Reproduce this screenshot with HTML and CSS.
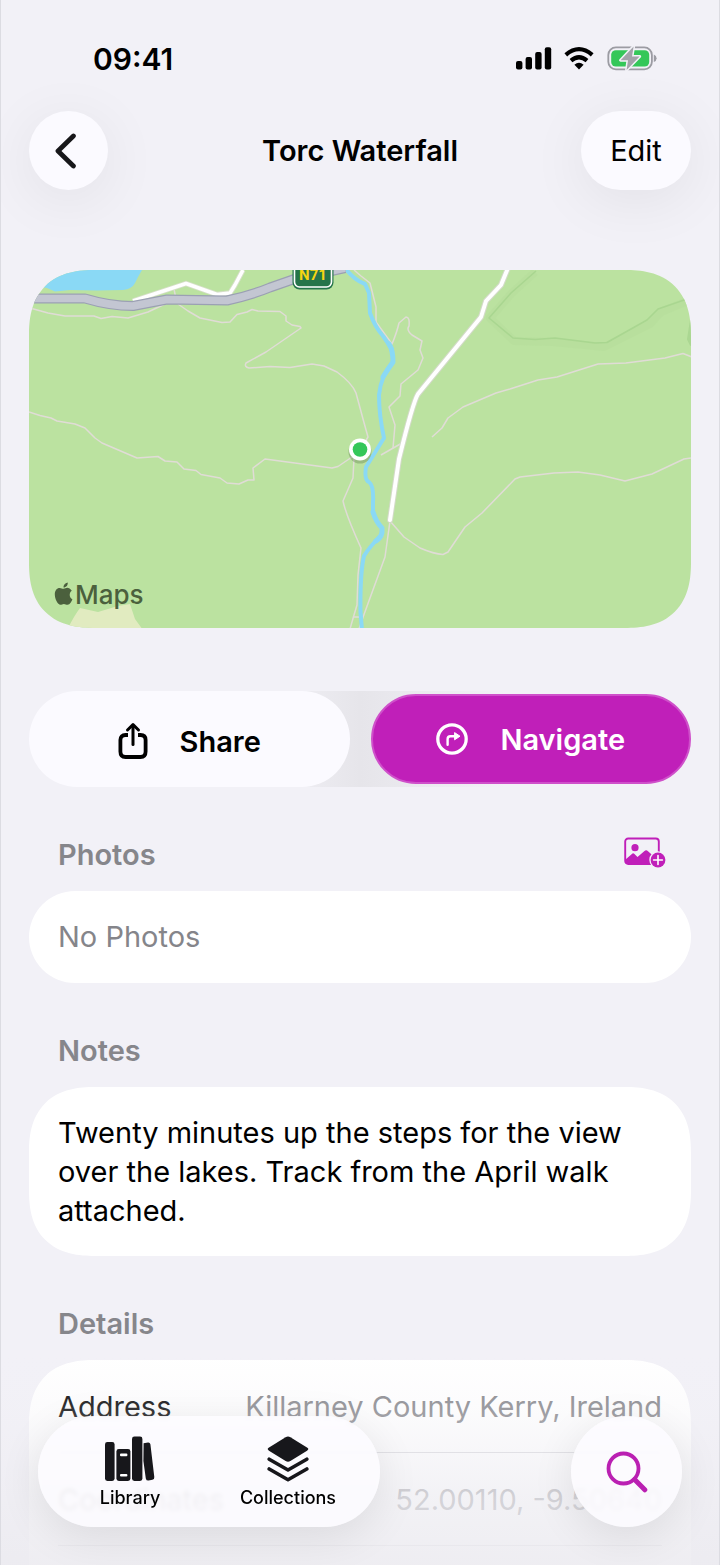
FILE: index.html
```html
<!DOCTYPE html>
<html lang="en">
<head>
<meta charset="utf-8">
<meta name="viewport" content="width=device-width, initial-scale=1">
<title>Torc Waterfall</title>
<link rel="stylesheet" href="styles.css">
</head>
<body>
<div class="screen">
  <div class="status">
    <span class="status-time">09:41</span>
    <svg class="status-icons" viewBox="516 45 142 28" width="142" height="28" aria-hidden="true">
      <g fill="#000">
        <rect x="516" y="61" width="6.4" height="8.4" rx="2"/>
        <rect x="525.6" y="57" width="6.4" height="12.4" rx="2"/>
        <rect x="535.2" y="52" width="6.4" height="17.4" rx="2"/>
        <rect x="544.8" y="47.2" width="6.4" height="22.2" rx="2"/>
      </g>
      <g fill="none" stroke="#000" stroke-width="4.2">
        <path d="M565.8 54.8 Q579 43.5 592.2 54.8"/>
        <path d="M571 60.6 Q579 53.8 587 60.6"/>
      </g>
      <path d="M574.4 64.8 Q579 60.8 583.6 64.8 L579 69.6 Z" fill="#000"/>
      <rect x="608.3" y="47.3" width="43.6" height="22" rx="7.6" fill="none" stroke="#9c9ca3" stroke-width="1.8"/>
      <path d="M653.8 54.4 q2.8 1 2.8 3.8 t-2.8 3.8z" fill="#9c9ca3"/>
      <rect x="611.2" y="50.2" width="38" height="16.4" rx="4.6" fill="#34c759"/>
      <path d="M633.6 46.4 L620.6 60.2 H628 L626.6 70 L639.6 56.4 H632 Z" fill="#a3a3aa" stroke="#f2f1f7" stroke-width="3" stroke-linejoin="round" paint-order="stroke"/>
    </svg>
  </div>

  <header class="navbar">
    <button class="glass back" type="button" aria-label="Back">
      <svg viewBox="0 0 22 36" width="22" height="36" aria-hidden="true"><path d="M18.4 3 L3 18 L18.4 33" fill="none" stroke="#17171a" stroke-width="4.8" stroke-linecap="round" stroke-linejoin="round"/></svg>
    </button>
    <h1 class="title">Torc Waterfall</h1>
    <button class="glass edit" type="button">Edit</button>
  </header>

  <main class="content">
    <svg class="map" viewBox="29 270 662 358" preserveAspectRatio="xMidYMid slice" role="img" aria-label="Map of Torc Waterfall">
      <rect x="29" y="270" width="662" height="358" fill="#bbe2a0"/>
      <path d="M36 286 L47 288 L55 291.5 L70 290 L97 290.5 L123 290 Q132 289 135 283 L138 277 L142 270 H29 Z" fill="#8ad9f5"/>
      <path d="M67 630 Q74 616 80 608 L98 612 L118 606 L130 604 L135 619 L143 630 Z" fill="#e1ebc0"/>
      <g fill="none" stroke-linejoin="round">
        <path d="M535 272 L512 293 L490 318 L514 341 L553 342 L604 347 L650 324 L661 312 L690 300" stroke="#b5dd9b" stroke-width="8" opacity=".6"/>
        <path d="M536 271 L511 293 L489 318 L513 338 L535 339.5 L555 338 L595 343 L607 342.5 L647 320 L658 309 L690 298" stroke="#a9d690" stroke-width="1.6"/>
        <path d="M692 320 L689 339 L692 345" stroke="#abd792" stroke-width="4"/>
      </g>
      <g fill="none" stroke="#e0dcd6" stroke-width="1.5" stroke-linejoin="round">
        <path d="M30 308 L48 313 L65 316 L94 316 L101 318.5 L112 316.5 L128 318 L148 312 L165 304 L176 299 L174 289"/>
        <path d="M178 304 L188 311 L200 318 L222 322.5 L230 322 L237 314.5 L247 312 L252 309.5 L258 311 L280 311.5 L286 316 L286 321 L292 325 L300 326.5 L301 328 L266 352 L246 363 Q244 367 249 368 L270 366.5 L290 367.5 L312 364 L324 366 L337 372 Q352 383 356 393 L363 419 L368 437 L362 447"/>
        <path d="M29 412 L40 415.5 L51 418 L57 421 L75 424 L85 428 L95 438 L102 443 L137 458 L158 456.5 L165 461 L177 462 L184 469 L196 470.5 L201 474.5 L220 478 L227 483 L239 484 L248 480 L254 480 L253 468 L265 459 L332 468 L338 466.5 L352 457"/>
        <path d="M354 458 L353 478 L343 501 Q346 515 361 548 L358 575 L357 605 L354 615 L350 629 M354 617 H362"/>
        <path d="M390 521 L385 557 L370 598 L362 620 L359 629"/>
        <path d="M354 270 L361 276 L370 283 L376 307 L376 322 L392 344 Q397 332 399 323 L406 317 Q410 317 409 326 Q406 330 412 335 L422 341 L420 350 L423 358 L418 370 L401 384 L400 396 L389 407 L395 425 L393 448"/>
        <path d="M381 455 L402 443"/>
        <path d="M432 437 L442 428 L448 418 L463 407 L496 393 L510 389 L538 380 L557 377 L598 364 L626 363 L665 358 L683 353.5 L692 357"/>
        <path d="M390 521 L404 537 L420 548 Q434 554 443 554.5 L448 552 L465 527 L482 513 L515 479 L520 477 L554 473 L578 472 L600 475 L625 481 L652 474 L684 459 L691 458"/>
      </g>
      <g fill="none" stroke="#8ad9f5" stroke-linecap="round" stroke-linejoin="round">
        <path d="M345 268 Q354 280 365 284 L369 293 L370 313 Q375 327 383 336 L392 349" stroke-width="4"/>
        <path d="M389 344 Q393 350 393 362 Q386 372 383 377" stroke-width="5"/>
        <path d="M393 362 Q381 375 379 395 Q379 415 384 438 L366 467 Q364 480 369 482 Q374 486 373 502 L373 513" stroke-width="4"/>
        <path d="M373 512 Q376 522 382 528 Q383 537 376 541" stroke-width="5"/>
        <path d="M380 536 Q368 549 364 556 Q360 573 360.500 612 L362 630" stroke-width="4"/>
      </g>
      <g fill="none" stroke-linejoin="round">
        <path d="M133 301 L186 283.500 L217 294.500 L230 293 L235 285 L243 270" stroke="#d6dfc9" stroke-width="5.4"/>
        <path d="M133 301 L186 283.500 L217 294.500 L230 293 L235 285 L243 270" stroke="#fff" stroke-width="3.6"/>
        <path d="M508 268 L501 285 L486 301 L481 317 L418 394 Q413 402 399 459 L390 520" stroke="#d3dac8" stroke-width="6" stroke-linecap="round"/>
        <path d="M508 268 L501 285 L486 301 L481 317 L418 394 Q413 402 399 459 L390 520" stroke="#fff" stroke-width="4" stroke-linecap="round"/>
        <path d="M28 298.500 L85 298.500 Q110 306 133 306 L167 299.500 L227 300.500 Q252 295 270 287.500 L293 279.500 L345 268" stroke="#9ba0b3" stroke-width="10"/>
        <path d="M28 298.500 L85 298.500 Q110 306 133 306 L167 299.500 L227 300.500 Q252 295 270 287.500 L293 279.500 L345 268" stroke="#c3c6d2" stroke-width="7.600"/>
      </g>
      <rect x="292.500" y="255" width="41" height="34.500" rx="7" fill="#26744a"/>
      <rect x="294.500" y="255" width="37" height="32" rx="5" fill="#26744a" stroke="#fff" stroke-width="1.600"/>
      <text class="map-shield" x="313" y="280" text-anchor="middle">N71</text>
      <path transform="translate(54.500 583)" d="M12.800 4.700 C11.500 4.700 10.300 5.700 9 5.700 C7.700 5.700 6.800 4.900 5.200 4.900 C2.300 4.900 .3 7.500 .3 11.300 C.3 16.200 3.300 21.700 5.900 21.700 C7.200 21.700 7.900 20.900 9.400 20.900 C11 20.900 11.500 21.700 13 21.700 C15.500 21.700 17.200 18.200 17.900 16.200 C14.400 14.600 14.500 9.500 17.300 7.800 C16 5.500 14.200 4.700 12.800 4.700 Z M13.200 -.6 C10.300 0 8.700 2.300 9 4.500 C11.800 4.400 13.600 1.900 13.200 -.6 Z" fill="#4b603d"/>
      <text class="map-brand" x="75" y="604">Maps</text>
      <circle cx="360" cy="452" r="11.500" fill="#3c5a30" opacity=".28"/>
      <circle cx="360" cy="449.500" r="11" fill="#fff"/>
      <circle cx="360" cy="449.500" r="7.300" fill="#34c759"/>
    </svg>

    <div class="actions">
      <button class="action share" type="button">
        <svg viewBox="0 0 30 38" width="30" height="38" aria-hidden="true"><g fill="none" stroke="#000" stroke-width="3.800" stroke-linecap="round" stroke-linejoin="round"><path d="M10 13 H7.500 Q2.400 13 2.400 18 V29.500 Q2.400 35 7.500 35 H22.500 Q27.600 35 27.600 29.500 V18 Q27.600 13 22.500 13 H20" stroke-linecap="butt"/><path d="M15 22.500 V4" stroke-width="3"/><path d="M9.500 8 L15 2.600 L20.500 8" stroke-width="3"/></g></svg>
        Share
      </button>
      <button class="action navigate" type="button">
        <svg viewBox="0 0 32 32" width="32" height="32" aria-hidden="true"><circle cx="16" cy="16" r="14.200" fill="none" stroke="#fff" stroke-width="3.300"/><path d="M11.600 21.800 V16 Q11.600 13.200 14.400 13.200 H19" fill="none" stroke="#fff" stroke-width="2.400" stroke-linecap="round"/><path d="M18.600 9.600 L24 13.200 L18.600 16.800 Z" fill="#fff" stroke="#fff" stroke-linejoin="round"/></svg>
        Navigate
      </button>
    </div>

    <section>
      <div class="section-head">
        <h2>Photos</h2>
        <button class="add-photo" type="button" aria-label="Add photo">
          <svg viewBox="0 0 42 32" width="42" height="32" aria-hidden="true"><rect x="1.200" y="1.500" width="33.600" height="25.500" rx="3" fill="none" stroke="#c01fb9" stroke-width="1.900"/><circle cx="11" cy="10.700" r="3.600" fill="#c01fb9"/><path d="M1.500 22.500 L8.500 16.600 Q9.300 16 10.200 16.800 L13.500 20 L20.500 13.900 Q22.300 12.600 24 14.200 L35 24 V27 H3 Q1.500 27 1.500 25 Z" fill="#c01fb9"/><circle cx="34" cy="23" r="8.700" fill="#f2f1f7"/><circle cx="34" cy="23" r="7.400" fill="#c01fb9"/><path d="M34 18.600 V27.400 M29.600 23 H38.400" stroke="#fff" stroke-width="1.600" stroke-linecap="round"/></svg>
        </button>
      </div>
      <div class="card photos-card">No Photos</div>
    </section>

    <section>
      <div class="section-head"><h2>Notes</h2></div>
      <p class="card notes-card">Twenty minutes up the steps for the view over the lakes. Track from the April walk attached.</p>
    </section>

    <section>
      <div class="section-head"><h2>Details</h2></div>
      <dl class="card details-card">
        <div class="row"><dt>Address</dt><dd>Killarney County Kerry, Ireland</dd></div>
        <div class="row"><dt>Coordinates</dt><dd>52.00110, -9.50640</dd></div>
        <div class="row"></div>
      </dl>
    </section>
  </main>

  <div class="fade"></div>

  <nav class="dock">
    <div class="tabs">
      <a class="tab" href="#library">
        <svg viewBox="0 0 50 46" width="50" height="46" aria-hidden="true"><g fill="#17171b"><rect x="0" y="6" width="9.600" height="39" rx="2.400"/><rect x="11.400" y="13" width="14" height="32" rx="2.400"/><rect x="27" y="0.500" width="10.400" height="44.500" rx="2.400"/><path d="M38.600 7.200 L43 6.400 Q45 6.200 45.400 8.200 L49.300 41 Q49.500 43.400 47.400 43.800 L43.600 44.600 Q41.200 44.800 40.800 42.400 L38.400 25 Z"/></g><rect x="15" y="17.600" width="7.400" height="2.600" rx="1" fill="#fff"/><rect x="15" y="38" width="7.400" height="2.600" rx="1" fill="#fff"/></svg>
        Library
      </a>
      <a class="tab" href="#collections">
        <svg viewBox="0 0 42 46" width="42" height="46" aria-hidden="true"><path d="M2 11.400 L18.600 1.200 Q21 -.2 23.400 1.200 L40 11.400 Q42.600 13 40 14.800 L23.400 25 Q21 26.400 18.600 25 L2 14.800 Q-.6 13 2 11.400 Z" fill="#17171b"/><g fill="none" stroke="#17171b" stroke-width="3.600" stroke-linecap="round" stroke-linejoin="round"><path d="M2.200 23.200 L21 34 L39.800 23.200"/><path d="M2.200 33 L21 43.800 L39.800 33"/></g></svg>
        Collections
      </a>
    </div>
    <button class="search" type="button" aria-label="Search">
      <svg viewBox="0 0 42 42" width="42" height="42" aria-hidden="true"><g fill="none" stroke="#ba20b2" stroke-linecap="round"><circle cx="17.500" cy="17.500" r="15" stroke-width="3.800"/><path d="M28.600 28.600 L38.800 38.800" stroke-width="5"/></g></svg>
    </button>
  </nav>
</div>
</body>
</html>
```
FILE: styles.css
```css
* { box-sizing: border-box; }

body {
  margin: 0;
  background: #f2f1f7;
  color: #000;
  font-family: Inter, "Liberation Sans", sans-serif;
  font-size: 29px;
}

button {
  padding: 0;
  border: 0;
  background: none;
  color: inherit;
  font: inherit;
}

svg { display: block; }

.screen {
  position: relative;
  height: 100vh;
  overflow: hidden;
  border: solid #dcdce2;
  border-width: 0 1px;
}

.status {
  display: flex;
  justify-content: space-between;
  align-items: center;
  height: 111px;
  padding: 7px 61px 0 92px;
}

.status-time {
  font-size: 30px;
  font-weight: 600;
}

.navbar {
  display: grid;
  grid-template-columns: 1fr auto 1fr;
  align-items: center;
  padding: 0 28px;
}

.glass {
  display: flex;
  align-items: center;
  justify-content: center;
  height: 79px;
  border-radius: 40px;
  background: #fbfaff;
  box-shadow: 0 10px 60px rgba(0, 0, 0, 0.07);
}

.back {
  width: 79px;
  padding-right: 6px;
}

.edit {
  justify-self: end;
  width: 110px;
}

.title {
  margin: 0;
  font-size: 29px;
  font-weight: 600;
}

.content { padding: 80px 28px 0; }

.map {
  width: 100%;
  height: auto;
  border-radius: 52px;
}

.map-shield {
  fill: #f6d512;
  font: 700 15px Roboto, sans-serif;
}

.map-brand {
  fill: #4b603d;
  font: 500 26px Inter, sans-serif;
}

.actions {
  display: grid;
  grid-template-columns: 1fr 1fr;
  gap: 21px;
  align-items: center;
  margin-top: 63px;
  background: linear-gradient(90deg, transparent 36%, #e6e5ea 50%, transparent 72%);
}

.action {
  display: flex;
  align-items: center;
  justify-content: center;
  gap: 32px;
  font-weight: 600;
}

.share {
  height: 96px;
  padding-top: 4px;
  border-radius: 48px;
  background: #fbfaff;
}

.navigate {
  height: 90px;
  border: 2px solid #cf50ca;
  border-radius: 45px;
  background: #c01fb9;
  color: #fff;
}

.section-head {
  display: flex;
  justify-content: space-between;
  align-items: flex-end;
  height: 104px;
  padding: 0 25px 18px 29px;
}

h2 {
  margin: 0;
  color: #86868b;
  font-size: 29px;
  font-weight: 600;
  line-height: 36px;
}

.add-photo { margin-bottom: 4px; }

.card {
  margin: 0;
  padding: 0 29px;
  border-radius: 52px;
  background: #fff;
}

.photos-card {
  height: 92px;
  color: #85858a;
  line-height: 92px;
}

.notes-card {
  padding-top: 26px;
  padding-bottom: 26px;
  line-height: 39px;
}

.row {
  display: flex;
  justify-content: space-between;
  align-items: center;
  height: 93px;
  border-bottom: 1px solid #d5d5da;
}

dd {
  margin: 0;
  color: #85858a;
}

.fade {
  position: absolute;
  inset: auto 0 0;
  height: 210px;
  background: linear-gradient(rgba(240, 239, 244, 0), rgba(240, 239, 244, 0.22) 26%, rgba(238, 237, 242, 0.74) 68%, rgba(236, 235, 240, 0.88));
}

.dock {
  position: absolute;
  inset: auto 37px 38px;
  display: flex;
  justify-content: space-between;
}

.tabs,
.search {
  height: 111px;
  border-radius: 56px;
  background: rgba(253, 252, 255, 0.84);
  backdrop-filter: blur(2px);
  box-shadow: 0 10px 44px rgba(0, 0, 0, 0.09);
}

.tabs {
  display: flex;
  padding: 0 13px;
}

.tab {
  display: flex;
  flex-direction: column;
  align-items: center;
  gap: 5px;
  width: 158px;
  padding-top: 20px;
  color: #000;
  font-size: 18px;
  font-weight: 500;
  line-height: 22px;
  text-decoration: none;
}

.search {
  display: flex;
  align-items: center;
  justify-content: center;
  width: 111px;
}

@supports (corner-shape: superellipse(1.3)) {
  .map,
  .notes-card,
  .details-card {
    border-radius: 66px;
    corner-shape: superellipse(1.3);
  }
}
```
